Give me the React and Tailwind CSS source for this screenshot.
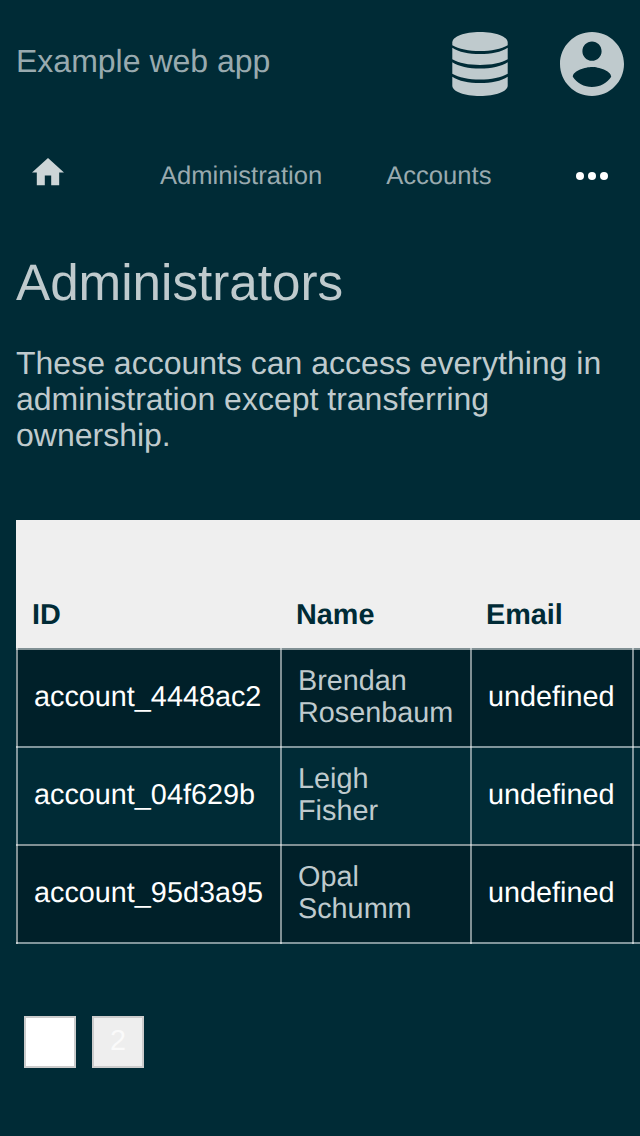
import React from "react";

const rows = [
  ["account_4448ac2", "Brendan", "Rosenbaum"],
  ["account_04f629b", "Leigh", "Fisher"],
  ["account_95d3a95", "Opal", "Schumm"],
];

function Row({ id, first, last, dark }) {
  const cell = "-mt-[2px] h-[98px] shrink-0 border-l-2 border-white/50 pl-4 flex items-center";
  return (
    <div className={"flex h-[98px] border-t-2 border-white/50 " + (dark ? "bg-[#002029]" : "bg-[#002b36]")}>
      <div className={cell + " w-[264px] text-white"}>{id}</div>
      <div className={cell + " w-[190px] text-[#bfcacd]"}>
        <span>{first}<br />{last}</span>
      </div>
      <div className={cell + " w-[162px] text-white"}>undefined</div>
      <div className={cell + " w-[200px]"} />
    </div>
  );
}

export default function App() {
  return (
    <div className="h-[1136px] w-[640px] overflow-hidden bg-[#002b36] font-['Liberation_Sans',Arial,sans-serif] text-[32px] leading-[36px] text-[#bfcacd] [text-rendering:geometricPrecision]">
      <header className="flex h-32 items-center px-4">
        <div className="-mt-[6px] flex-1 text-[#99aaaf]">Example web app</div>
        <svg className="mr-[52px] h-16 w-14" viewBox="0 0 56 64" fill="currentColor">
          <path d="M.3 10.5C.3 4.5 12.5 0 28 0s27.7 4.5 27.7 10.5v2.7C49.5 17 39 19 28 19S6.500 17 .3 13.200z" />
          <path d="M.3 15.700C6.500 20 17 22 28 22s21.500-2 27.700-6.300v11.600C49.500 31 39 33 28 33S6.500 31 .3 27.300z" />
          <path d="M.3 30.300C6.500 34.500 17 36.600 28 36.600s21.500-2.100 27.700-6.300v11.500C49.500 45.600 39 47.600 28 47.600S6.500 45.600 .3 41.800z" />
          <path d="M.3 44.700C6.500 49 17 51 28 51s21.500-2 27.700-6.300v9.100C55.700 59.500 43.500 64 28 64S.3 59.500 .3 53.800z" />
        </svg>
        <svg className="size-16" viewBox="2 2 20 20" fill="currentColor">
          <path d="M12 2C6.48 2 2 6.48 2 12s4.48 10 10 10 10-4.48 10-10S17.52 2 12 2zm0 3c1.66 0 3 1.34 3 3s-1.34 3-3 3-3-1.34-3-3 1.34-3 3-3zm0 14.2c-2.5 0-4.71-1.28-6-3.22.03-1.99 4-3.08 6-3.08 1.99 0 5.97 1.09 6 3.08-1.29 1.94-3.5 3.22-6 3.22z" />
        </svg>
      </header>
      <nav className="flex h-24 items-center px-8 text-[25.6px] text-[#99aaaf]">
        <svg className="-mt-2 mr-24 h-[27.2px] w-8 text-[#ccd5d7]" viewBox="2 3 20 17" fill="currentColor">
          <path d="M10 20v-6h4v6h5v-8h3L12 3 2 12h3v8z" />
        </svg>
        <span className="mr-16">Administration</span>
        <span className="flex-1">Accounts</span>
        <svg className="h-2 w-8 text-white" viewBox="0 0 32 8" fill="currentColor">
          <circle cx="4" cy="4" r="4" />
          <circle cx="16" cy="4" r="4" />
          <circle cx="28" cy="4" r="4" />
        </svg>
      </nav>
      <main className="pl-4">
        <h1 className="pt-[30px] text-[51.2px] leading-[58px]">Administrators</h1>
        <p className="w-[600px] pt-[33px]">
          These accounts can access everything in administration except transferring ownership.
        </p>
        <div className="mt-[67px] w-[816px] text-[28.8px] leading-8">
          <div className="flex h-32 items-end bg-[#efefef] pb-[17px] font-bold text-[#002b36]">
            <div className="w-[264px] pl-4">ID</div>
            <div className="w-[190px] pl-4">Name</div>
            <div className="w-[162px] pl-4">Email</div>
          </div>
          {rows.map(([id, first, last], i) => (
            <Row key={id} id={id} first={first} last={last} dark={i % 2 === 0} />
          ))}
          <div className="flex h-[2px] bg-white/50">
            <div className="w-[264px] border-l-2 border-white/50" />
            <div className="w-[190px] border-l-2 border-white/50" />
            <div className="w-[162px] border-l-2 border-white/50" />
            <div className="w-[200px] border-l-2 border-white/50" />
          </div>
        </div>
        <div className="mt-[72px] flex gap-4 pl-2 text-[28.8px] text-white">
          <div className="flex size-[52px] items-center justify-center border-2 border-[#ccc] bg-white pb-[2px]">1</div>
          <div className="flex size-[52px] items-center justify-center border-2 border-[#ccc] bg-[#eee] pb-[2px] text-[#fafafa]">2</div>
        </div>
      </main>
    </div>
  );
}
